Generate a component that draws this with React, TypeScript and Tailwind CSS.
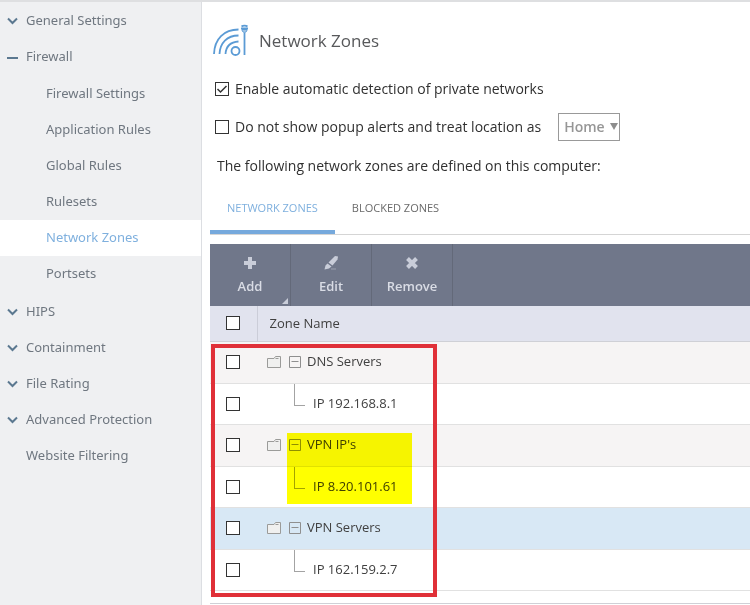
import { Fragment, useState } from 'react'
import { clsx } from 'clsx'

type NavItem = {
  label: string
  state?: 'closed' | 'open'
  children?: string[]
}

const NAV_ITEMS: NavItem[] = [
  { label: 'General Settings', state: 'closed' },
  {
    label: 'Firewall',
    state: 'open',
    children: [
      'Firewall Settings',
      'Application Rules',
      'Global Rules',
      'Rulesets',
      'Network Zones',
      'Portsets',
    ],
  },
  { label: 'HIPS', state: 'closed' },
  { label: 'Containment', state: 'closed' },
  { label: 'File Rating', state: 'closed' },
  { label: 'Advanced Protection', state: 'closed' },
  { label: 'Website Filtering' },
]

const ZONES = [
  { name: 'DNS Servers', address: 'IP 192.168.8.1' },
  { name: "VPN IP's", address: 'IP 8.20.101.61' },
  { name: 'VPN Servers', address: 'IP 162.159.2.7', selected: true },
]

type CheckboxProps = {
  label?: string
  defaultChecked?: boolean
}

function Checkbox({ label, defaultChecked }: CheckboxProps) {
  return (
    <span className="relative block size-3.5 shrink-0">
      <input
        type="checkbox"
        aria-label={label}
        defaultChecked={defaultChecked}
        className="peer block size-3.5 appearance-none border border-[#333] bg-white"
      />
      <svg
        className="pointer-events-none absolute inset-0 hidden peer-checked:block"
        width="14"
        height="14"
        viewBox="0 0 14 14"
        fill="none"
        stroke="#333"
        strokeWidth="1.5"
      >
        <path d="M2.500 7 5.500 10 11.500 4" />
      </svg>
    </span>
  )
}

function NavMarker({ state }: { state?: 'closed' | 'open' }) {
  return (
    <svg className="w-[11px] shrink-0" height="10" viewBox="0 0 11 10" fill="none" stroke="#5b7890" strokeWidth="2">
      {state === 'closed' && <path d="M1 2.500 5.500 7 10 2.500" />}
      {state === 'open' && <path d="M0 6h11" />}
    </svg>
  )
}

function Sidebar() {
  const [active, setActive] = useState('Network Zones')

  return (
    <nav className="w-[202px] shrink-0 border-r border-[#dcdee2] bg-[#eff0f2] pt-px font-['Noto_Sans',sans-serif] text-[13px] text-[#6f7780]">
      <ul>
        {NAV_ITEMS.map((item) => (
          <li key={item.label}>
            <a href="#" className="flex h-9 items-center gap-2 pl-[7px]">
              <NavMarker state={item.state} />
              {item.label}
            </a>
            {item.children && (
              <ul className="pt-px pb-0.5">
                {item.children.map((child) => (
                  <li key={child}>
                    <a
                      href="#"
                      onClick={() => setActive(child)}
                      className={clsx(
                        'flex h-9 items-center pl-[46px]',
                        active === child && 'bg-white text-[#7fb0de]'
                      )}
                    >
                      {child}
                    </a>
                  </li>
                ))}
              </ul>
            )}
          </li>
        ))}
      </ul>
    </nav>
  )
}

function ZonesLogo() {
  return (
    <svg width="36" height="34" viewBox="0 0 36 34" fill="none" stroke="#5b9bd5" strokeWidth="1.8">
      <path d="M1 30C1.500 15 11 5.500 25.500 5.500" />
      <path d="M6.500 30C7 19 14 11.500 25.500 11.500" />
      <path d="M12.500 30C13 22.500 17.500 18 25.500 17.500" />
      <circle cx="22.500" cy="27" r="4" />
      <path d="M31.500 9v22" />
      <path d="M28.500 2.500c1.500-1.200 4.500-1.200 6 0M28 4.500h7" />
      <path d="M29 5.500c0 4 5 4 5 0z" fill="#5b9bd5" fillOpacity="0.6" strokeWidth="1" />
    </svg>
  )
}

function FolderIcon() {
  return (
    <svg width="14" height="12" viewBox="0 0 14 12" fill="#f0f0ef" stroke="#9b9b99">
      <path d="M.5 11.500v-9h6.500l1.500-2h5v11z" />
      <path d="M8.500 2.500h3" />
    </svg>
  )
}

function CollapseIcon() {
  return (
    <svg width="12" height="12" viewBox="0 0 12 12" fill="none" stroke="#8f8f8f">
      <path d="M.5.5h11v11H.5zM2.500 5.500h7" />
    </svg>
  )
}

function Toolbar() {
  const buttonClass =
    'relative flex w-[81px] flex-col items-center border-r border-[#636979] pt-3'

  return (
    <div className="flex h-[62px] bg-[#70778a] text-[13px] leading-5 font-semibold text-[#d9dce5]">
      <button type="button" className={buttonClass}>
        <svg width="14" height="14" viewBox="0 0 14 14" stroke="#c9cdd9" strokeWidth="4">
          <path d="M7 1v12M1 7h12" />
        </svg>
        <span className="mt-1.5">Add</span>
        <svg className="absolute right-0.5 bottom-0.5" width="6" height="6" viewBox="0 0 6 6" fill="#c9cdd9">
          <path d="M6 0v6H0z" />
        </svg>
      </button>
      <button type="button" className={buttonClass}>
        <svg width="14" height="14" viewBox="0 0 14 14" fill="#c9cdd9">
          <path d="M11 0 14 .5 13.500 3.500 8.500 9.500 4.500 6.500z" />
          <path d="M3.500 7.500 7.500 10.500 5 12.500 0.500 13.500 1.500 9.500z" />
          <path d="M7 12.500h5v1H7z" fillOpacity="0.5" />
        </svg>
        <span className="mt-1.5">Edit</span>
      </button>
      <button type="button" className={buttonClass}>
        <svg width="14" height="14" viewBox="0 0 14 14" stroke="#c9cdd9" strokeWidth="4">
          <path d="M2.500 2.500l9 9M11.500 2.500l-9 9" />
        </svg>
        <span className="mt-1.5">Remove</span>
      </button>
    </div>
  )
}

function ZoneTable() {
  return (
    <div className="relative border-b border-[#cfd0d6] pb-3">
      <table className="w-full border-collapse text-left text-[13px] text-[#404040]">
        <thead>
          <tr className="h-[35px] border-b border-[#cfd0d6] bg-[#e1e3ee]">
            <th className="w-[47px] border-r border-[#cbcdd8] pl-4">
              <Checkbox label="Select all zones" />
            </th>
            <th className="pl-3 font-normal">Zone Name</th>
          </tr>
        </thead>
        <tbody>
          {ZONES.map((zone) => (
            <Fragment key={zone.name}>
              <tr
                className={clsx(
                  'h-[42px] border-b border-[#e1e1e1]',
                  zone.selected ? 'bg-[#d8e8f5]' : 'bg-[#f6f4f4]'
                )}
              >
                <td className="pl-4">
                  <Checkbox label={zone.name} />
                </td>
                <td className="pl-2.5">
                  <div className="flex items-center">
                    <FolderIcon />
                    <button type="button" aria-label="Collapse" className="mr-1.5 ml-2">
                      <CollapseIcon />
                    </button>
                    {zone.name}
                  </div>
                </td>
              </tr>
              <tr className="h-[41px] border-b border-[#e1e1e1]">
                <td className="pl-4">
                  <Checkbox label={zone.address} />
                </td>
                <td className="pl-[37px] align-top">
                  <div className="flex">
                    <span className="mr-2 h-[22px] w-[11px] border-b border-l border-[#a3a3a3]" />
                    <span className="pt-2.5">{zone.address}</span>
                  </div>
                </td>
              </tr>
            </Fragment>
          ))}
        </tbody>
      </table>
      {/* user annotations drawn over the rows */}
      <div className="pointer-events-none absolute top-[127px] left-[77px] h-[71px] w-[125px] bg-[#ffff00] mix-blend-multiply" />
      <div className="pointer-events-none absolute top-[38px] left-px h-[253px] w-[226px] border-4 border-[#e03038]" />
    </div>
  )
}

export default function App() {
  const [tab, setTab] = useState('NETWORK ZONES')

  return (
    <div className="flex min-h-screen border-t-2 border-[#dedfe1] bg-white font-['Open_Sans','Noto_Sans',sans-serif]">
      <Sidebar />
      <main className="min-w-0 flex-1 pl-2">
        <header className="flex items-center gap-2.5 pt-[22px] pl-[3px]">
          <ZonesLogo />
          <h1 className="text-[17px] text-[#58595b]">Network Zones</h1>
        </header>
        <div className="mt-[17px] pl-[5px] text-sm text-[#303030]">
          <label className="flex h-7 items-center gap-1.5">
            <Checkbox defaultChecked />
            Enable automatic detection of private networks
          </label>
          <div className="mt-2.5 flex items-center">
            <label className="flex h-7 items-center gap-1.5">
              <Checkbox />
              Do not show popup alerts and treat location as
            </label>
            <div className="relative ml-[17px]">
              <select
                aria-label="Location"
                className="block h-7 w-[62px] appearance-none border border-[#999] pl-[5px] text-sm font-semibold text-[#969696]"
              >
                <option>Home</option>
              </select>
              <svg className="pointer-events-none absolute top-2.5 right-0.5" width="8" height="7" viewBox="0 0 8 7" fill="#8d8d8d">
                <path d="M0 0h8L4 7z" />
              </svg>
            </div>
          </div>
          <p className="mt-[15px] pl-0.5">The following network zones are defined on this computer:</p>
        </div>
        <div className="mt-2.5 flex border-b border-[#d5d5d5] text-[11px]">
          {['NETWORK ZONES', 'BLOCKED ZONES'].map((name) => (
            <button
              key={name}
              type="button"
              onClick={() => setTab(name)}
              className={clsx(
                'h-12 border-b-4 px-[17px]',
                tab === name ? 'border-[#76a9dc] text-[#7fb0de]' : 'border-transparent text-[#6b6b6b]'
              )}
            >
              {name}
            </button>
          ))}
        </div>
        <div className="mt-[9px]">
          <Toolbar />
          <ZoneTable />
        </div>
      </main>
    </div>
  )
}
